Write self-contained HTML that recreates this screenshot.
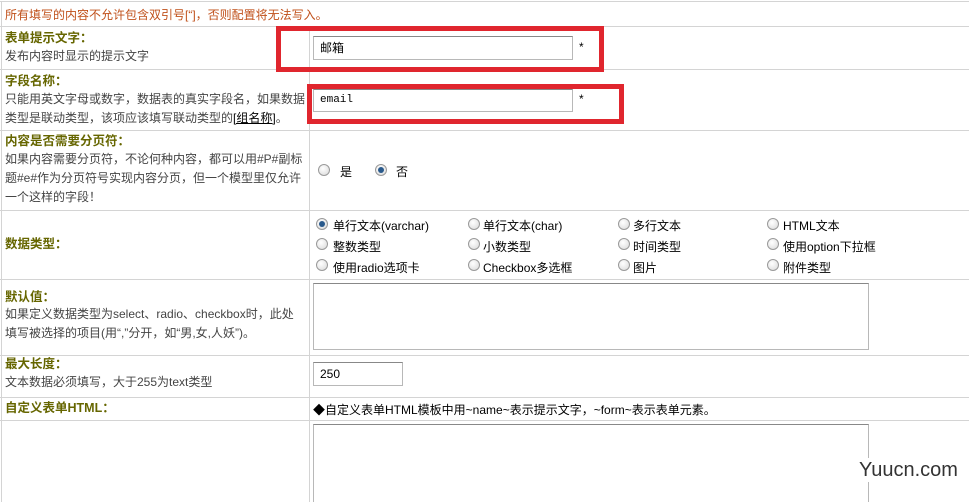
<!DOCTYPE html>
<html><head><meta charset="utf-8"><style>
*{margin:0;padding:0;box-sizing:border-box}
html,body{width:969px;height:502px;overflow:hidden}
body{background:#fff;position:relative;font-family:"Liberation Sans","Noto Sans CJK SC",sans-serif;font-size:12px;color:#333}
.a{position:absolute;white-space:nowrap}
.h{position:absolute;left:0;width:969px;height:1px;background:#d4d4d4}
.v{position:absolute;width:1px;background:#d4d4d4}
.lb{color:#666600;font-weight:bold;font-size:12.5px;line-height:15px}
.ds{color:#444;line-height:19px}
.inp{position:absolute;border:1px solid #b8b8b8;border-top-color:#888;background:#fff;font-size:12px;padding-left:6px;color:#000}
.red{position:absolute;border:5px solid #e0262e}
.r{position:absolute;width:12px;height:12px;border-radius:50%;border:1px solid #9a9a9a;background:radial-gradient(circle at 40% 35%,#fff,#d8d8d8)}
.r.on::after{content:"";position:absolute;left:2px;top:2px;width:6px;height:6px;border-radius:50%;background:#2a5a8c}
.rt{position:absolute;font-size:12px;color:#000;white-space:nowrap}
</style></head><body>
<div class="h" style="top:1px"></div>
<div class="h" style="top:26px"></div>
<div class="h" style="top:69px"></div>
<div class="h" style="top:130px"></div>
<div class="h" style="top:210px"></div>
<div class="h" style="top:279px"></div>
<div class="h" style="top:355px"></div>
<div class="h" style="top:397px"></div>
<div class="h" style="top:420px"></div>
<div class="v" style="left:1px;top:1px;height:501px"></div>
<div class="v" style="left:309px;top:26px;height:476px"></div>

<div class="a" style="left:5px;top:6px;color:#c0501a;font-size:12px">所有填写的内容不允许包含双引号[“]，否则配置将无法写入。</div>

<div class="a lb" style="left:5px;top:31px">表单提示文字：</div>
<div class="a ds" style="left:5px;top:47px">发布内容时显示的提示文字</div>
<div class="inp" style="left:313px;top:36px;width:260px;height:24px;line-height:22px">邮箱</div>
<div class="a" style="left:579px;top:40px;color:#000">*</div>
<div class="red" style="left:276px;top:26px;width:328px;height:46px"></div>

<div class="a lb" style="left:5px;top:74px">字段名称：</div>
<div class="a ds" style="left:5px;top:90px">只能用英文字母或数字，数据表的真实字段名，如果数据<br>类型是联动类型，该项应该填写联动类型的<u style="color:#000">[组名称]</u>。</div>
<div class="inp" style="left:313px;top:89px;width:260px;height:23px;padding-top:4px;font-family:'Liberation Mono',monospace;font-size:11px">email</div>
<div class="a" style="left:579px;top:92px;color:#000">*</div>
<div class="red" style="left:307px;top:84px;width:317px;height:40px"></div>

<div class="a lb" style="left:5px;top:134px">内容是否需要分页符：</div>
<div class="a ds" style="left:5px;top:150px">如果内容需要分页符，不论何种内容，都可以用#P#副标<br>题#e#作为分页符号实现内容分页，但一个模型里仅允许<br>一个这样的字段！</div>
<div class="r" style="left:318px;top:164px"></div><div class="rt" style="left:340px;top:163px">是</div>
<div class="r on" style="left:375px;top:164px"></div><div class="rt" style="left:396px;top:163px">否</div>

<div class="a lb" style="left:5px;top:237px">数据类型：</div>
<div class="r on" style="left:316px;top:218px"></div><div class="rt" style="left:333px;top:217px">单行文本(varchar)</div>
<div class="r" style="left:468px;top:218px"></div><div class="rt" style="left:483px;top:217px">单行文本(char)</div>
<div class="r" style="left:618px;top:218px"></div><div class="rt" style="left:633px;top:217px">多行文本</div>
<div class="r" style="left:767px;top:218px"></div><div class="rt" style="left:783px;top:217px">HTML文本</div>
<div class="r" style="left:316px;top:238px"></div><div class="rt" style="left:333px;top:238px">整数类型</div>
<div class="r" style="left:468px;top:238px"></div><div class="rt" style="left:483px;top:238px">小数类型</div>
<div class="r" style="left:618px;top:238px"></div><div class="rt" style="left:633px;top:238px">时间类型</div>
<div class="r" style="left:767px;top:238px"></div><div class="rt" style="left:783px;top:238px">使用option下拉框</div>
<div class="r" style="left:316px;top:259px"></div><div class="rt" style="left:333px;top:259px">使用radio选项卡</div>
<div class="r" style="left:468px;top:259px"></div><div class="rt" style="left:483px;top:259px">Checkbox多选框</div>
<div class="r" style="left:618px;top:259px"></div><div class="rt" style="left:633px;top:259px">图片</div>
<div class="r" style="left:767px;top:259px"></div><div class="rt" style="left:783px;top:259px">附件类型</div>

<div class="a lb" style="left:5px;top:290px">默认值：</div>
<div class="a ds" style="left:5px;top:305px">如果定义数据类型为select、radio、checkbox时，此处<br>填写被选择的项目(用“,”分开，如“男,女,人妖”)。</div>
<div class="inp" style="left:313px;top:283px;width:556px;height:67px"></div>

<div class="a lb" style="left:5px;top:357px">最大长度：</div>
<div class="a ds" style="left:5px;top:373px">文本数据必须填写，大于255为text类型</div>
<div class="inp" style="left:313px;top:362px;width:90px;height:24px;line-height:22px">250</div>

<div class="a lb" style="left:5px;top:401px">自定义表单HTML：</div>
<div class="a" style="left:313px;top:401px;color:#000">◆自定义表单HTML模板中用~name~表示提示文字，~form~表示表单元素。</div>
<div class="inp" style="left:313px;top:424px;width:556px;height:78px;border-bottom:none"></div>
<div class="a" style="left:857px;top:458px;font-size:20px;color:#333;background:#fff;padding:0 2px;line-height:24px">Yuucn.com</div>
</body></html>
